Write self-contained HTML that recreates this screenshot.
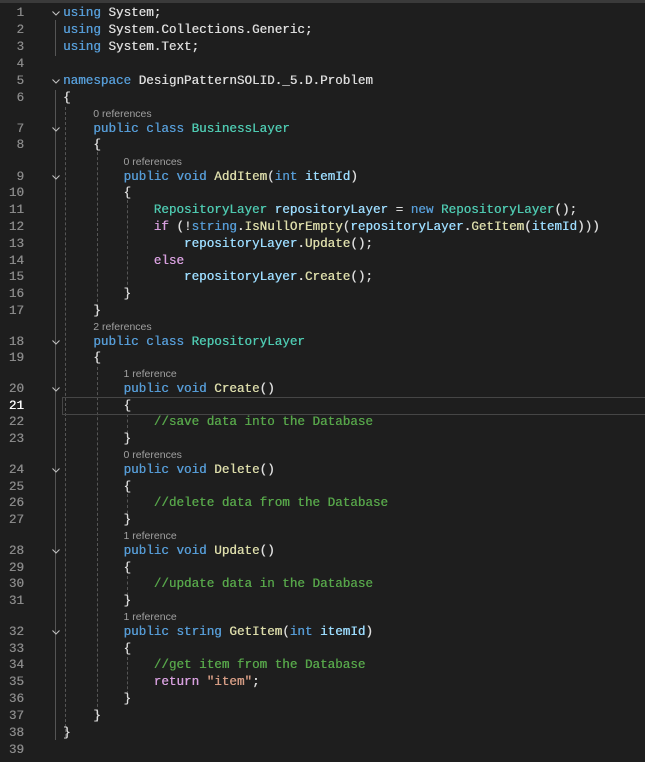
<!DOCTYPE html>
<html><head><style>
body{margin:0;background:#1e1e1e;width:645px;height:762px;overflow:hidden;position:relative;font-family:"Liberation Mono",monospace;}
.l{position:absolute;left:63px;font-size:12.6px;line-height:17px;height:17px;white-space:pre;color:#dcdcdc;text-shadow:0.35px 0 0 currentColor;}
.n{position:absolute;left:0;width:24px;text-align:right;font-size:12.6px;line-height:17px;color:#8a8a8a;text-shadow:0.3px 0 0 currentColor;}
.r{position:absolute;font-family:"Liberation Sans",sans-serif;font-size:10.5px;color:#a0a0a0;line-height:12px;}
.c{position:absolute;left:51px;width:10px;height:17px;}
.k{color:#569cd6}.t{color:#4ec9b0}.m{color:#dcdcaa}.v{color:#9cdcfe}.g{color:#57a64a}.s{color:#d69d85}.p{color:#d8a0df}
.g1{position:absolute;border-left:1px dashed #555;width:0}
</style></head><body>
<div style="position:absolute;top:0;left:0;width:645px;height:3px;background:#3a3a3a"></div>
<div style="position:absolute;left:55px;top:20px;width:0;height:36px;border-left:1px solid #555"></div>
<div style="position:absolute;left:55px;top:90px;width:0;height:650px;border-left:1px solid #555"></div>
<div class="g1" style="left:65px;top:107px;height:630px"></div>
<div class="g1" style="left:97px;top:152px;height:160px"></div>
<div class="g1" style="left:97px;top:367px;height:355px"></div>
<div class="g1" style="left:127px;top:200px;height:95px"></div>
<div class="g1" style="left:127px;top:414px;height:25px"></div>
<div class="g1" style="left:127px;top:494px;height:25px"></div>
<div class="g1" style="left:127px;top:576px;height:25px"></div>
<div class="g1" style="left:127px;top:657px;height:42px"></div>
<div style="position:absolute;left:62px;top:397px;width:590px;height:16px;border:1px solid #464646"></div>

<div id="code"></div>
<script>
var L=[
[12,'<span class="k">using</span> System;',1],
[29,'<span class="k">using</span> System.Collections.Generic;'],
[46,'<span class="k">using</span> System.Text;'],
[63,''],
[80,'<span class="k">namespace</span> DesignPatternSOLID._5.D.Problem',1],
[97,'{'],
[128,'    <span class="k">public class</span> <span class="t">BusinessLayer</span>',1,'0 references'],
[144,'    {'],
[176,'        <span class="k">public void</span> <span class="m">AddItem</span>(<span class="k">int</span> <span class="v">itemId</span>)',1,'0 references'],
[192,'        {'],
[209,'            <span class="t">RepositoryLayer</span> <span class="v">repositoryLayer</span> = <span class="k">new</span> <span class="t">RepositoryLayer</span>();'],
[226,'            <span class="p">if</span> (!<span class="k">string</span>.<span class="m">IsNullOrEmpty</span>(<span class="v">repositoryLayer</span>.<span class="m">GetItem</span>(<span class="v">itemId</span>)))'],
[243,'                <span class="v">repositoryLayer</span>.<span class="m">Update</span>();'],
[260,'            <span class="p">else</span>'],
[276,'                <span class="v">repositoryLayer</span>.<span class="m">Create</span>();'],
[293,'        }'],
[310,'    }'],
[341,'    <span class="k">public class</span> <span class="t">RepositoryLayer</span>',1,'2 references'],
[357,'    {'],
[388,'        <span class="k">public void</span> <span class="m">Create</span>()',1,'1 reference'],
[405,'        {'],
[421,'            <span class="g">//save data into the Database</span>'],
[438,'        }'],
[469,'        <span class="k">public void</span> <span class="m">Delete</span>()',1,'0 references'],
[486,'        {'],
[502,'            <span class="g">//delete data from the Database</span>'],
[519,'        }'],
[550,'        <span class="k">public void</span> <span class="m">Update</span>()',1,'1 reference'],
[567,'        {'],
[583,'            <span class="g">//update data in the Database</span>'],
[600,'        }'],
[631,'        <span class="k">public string</span> <span class="m">GetItem</span>(<span class="k">int</span> <span class="v">itemId</span>)',1,'1 reference'],
[648,'        {'],
[664,'            <span class="g">//get item from the Database</span>'],
[681,'            <span class="p">return</span> <span class="s">"item"</span>;'],
[698,'        }'],
[715,'    }'],
[732,'}'],
[749,'']
];
var h='';
L.forEach(function(x,i){
 var t=x[0]-7;
 h+='<div class="n" style="top:'+t+'px'+(i==20?';color:#fff':'')+'">'+(i+1)+'</div>';
 h+='<div class="l" style="top:'+t+'px">'+x[1]+'</div>';
 if(x[2])h+='<svg class="c" style="top:'+t+'px" viewBox="0 0 10 17"><path d="M1.5 6.5 L5 10 L8.5 6.5" fill="none" stroke="#c0c0c0" stroke-width="1.1"/></svg>';
 if(x[3]){var ind=x[1].match(/^ */)[0].length;h+='<div class="r" style="top:'+(t-13)+'px;left:'+(63+ind*7.57)+'px">'+x[3]+'</div>';}
});
document.getElementById('code').innerHTML=h;
</script>
</body></html>
